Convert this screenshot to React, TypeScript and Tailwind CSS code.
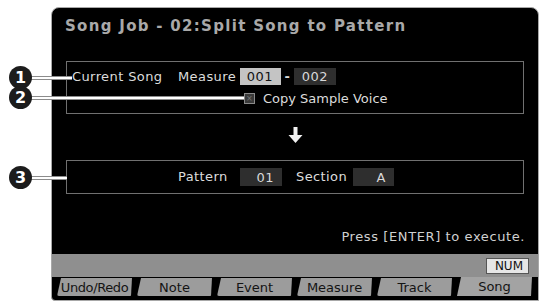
import React from "react";

const tabs = ["Undo/Redo", "Note", "Event", "Measure", "Track", "Song"];

function Callout({ n, top, lineTo }: { n: number; top: number; lineTo: number }) {
  return (
    <div className="absolute left-[9px] flex items-center" style={{ top }}>
      <div className="z-10 flex h-[23px] w-[23px] items-center justify-center rounded-full bg-[#1c1c1c] text-[16px] font-bold leading-none text-white">
        {n}
      </div>
      <div
        className="-ml-[1px] h-[4px] border-y border-[#8c8c8c] bg-white"
        style={{ width: lineTo - 31 }}
      />
    </div>
  );
}

function ValueBox({ value, light = false, w }: { value: string; light?: boolean; w: string }) {
  return (
    <div
      className={`flex h-[17px] items-center justify-end pr-[8px] text-[13px] leading-none tracking-[0.5px] ${w} ${
        light ? "bg-[#c4c4c4] text-[#111]" : "bg-[#2e2e2e] text-[#d8d8d8]"
      }`}
    >
      {value}
    </div>
  );
}

export default function App() {
  return (
    <div className="relative h-[304px] w-[540px] overflow-hidden bg-white font-['DejaVu_Sans',sans-serif]">
      <div className="ml-[51px] pt-[7px]">
        <div className="flex h-[294px] w-[488px] flex-col rounded-tl-[8px] rounded-tr-[8px] rounded-bl-[4px] border border-[#a8a8a8] bg-black">
          <div className="pl-[13px] pt-[9px] text-[15px] font-bold leading-[18px] tracking-[1.3px] text-[#a9a9a9]">
            Song Job - 02:Split Song to Pattern
          </div>

          <div className="ml-[14px] mt-[26px] h-[53px] w-[458px] border border-[#707070] text-[13px] tracking-[0.4px] text-[#dcdcdc]">
            <div className="flex items-center pt-[6px]">
              <span className="w-[111px] pl-[5px] leading-[17px]">Current Song</span>
              <span className="w-[62px] leading-[17px]">Measure</span>
              <ValueBox value="001" light w="w-[41px]" />
              <span className="w-[13px] text-center font-bold leading-[17px]">-</span>
              <ValueBox value="002" w="w-[42px]" />
            </div>
            <div className="mt-[6px] flex items-center pl-[177px]">
              <div className="flex h-[11px] w-[11px] items-center justify-center border border-[#8a8a8a] bg-[#3a3a3a] text-[8px] leading-none text-[#777]">
                ×
              </div>
              <span className="ml-[8px] leading-[15px] tracking-[0px]">Copy Sample Voice</span>
            </div>
          </div>

          <div className="mt-[13px] flex justify-center">
            <svg width="15" height="16" viewBox="0 0 15 16">
              <path d="M5.5 0h4v8h5l-7 8-7-8h5z" fill="#f2f2f2" />
            </svg>
          </div>

          <div className="ml-[14px] mt-[17px] flex h-[34px] w-[458px] items-center border border-[#707070] text-[13px] tracking-[0.4px] text-[#dcdcdc]">
            <span className="w-[173px] pl-[111px] leading-[18px]">Pattern</span>
            <ValueBox value="01" w="w-[42px] h-[18px]" />
            <span className="ml-[14px] w-[57px] leading-[18px]">Section</span>
            <ValueBox value="A" w="w-[41px] h-[18px]" />
          </div>

          <div className="mt-[35px] pr-[13px] text-right text-[13px] leading-[16px] tracking-[0.6px] text-[#d0d0d0]">
            Press [ENTER] to execute.
          </div>

          <div className="mt-[9px] flex h-[23px] items-center justify-end bg-[#8f8f8f] pr-[9px]">
            <div className="flex h-[16px] w-[43px] items-center justify-end border border-[#555] bg-[#e6e6e6] pr-[5px] text-[12px] leading-none text-[#111]">
              NUM
            </div>
          </div>

          <div className="flex h-[19px] gap-[5px] pl-[5px]">
            {tabs.map((t) => {
              const active = t === "Song";
              return (
                <div
                  key={t}
                  className={`flex w-[75px] items-center justify-center text-[13px] leading-none text-[#141414] ${
                    active
                      ? "bg-[#a3a3a3] [clip-path:polygon(4px_0,100%_0,calc(100%-1px)_100%,0_100%)]"
                      : "mt-[1px] rounded-b-[2px] bg-[#9c9c9c] [clip-path:polygon(4px_0,100%_0,calc(100%-1px)_100%,0_100%)]"
                  } ${t === "Undo/Redo" ? "tracking-[-0.4px]" : ""}`}
                >
                  {t}
                </div>
              );
            })}
          </div>
        </div>
      </div>

      <Callout n={1} top={66} lineTo={72} />
      <Callout n={2} top={86} lineTo={244} />
      <Callout n={3} top={166} lineTo={67} />
    </div>
  );
}
